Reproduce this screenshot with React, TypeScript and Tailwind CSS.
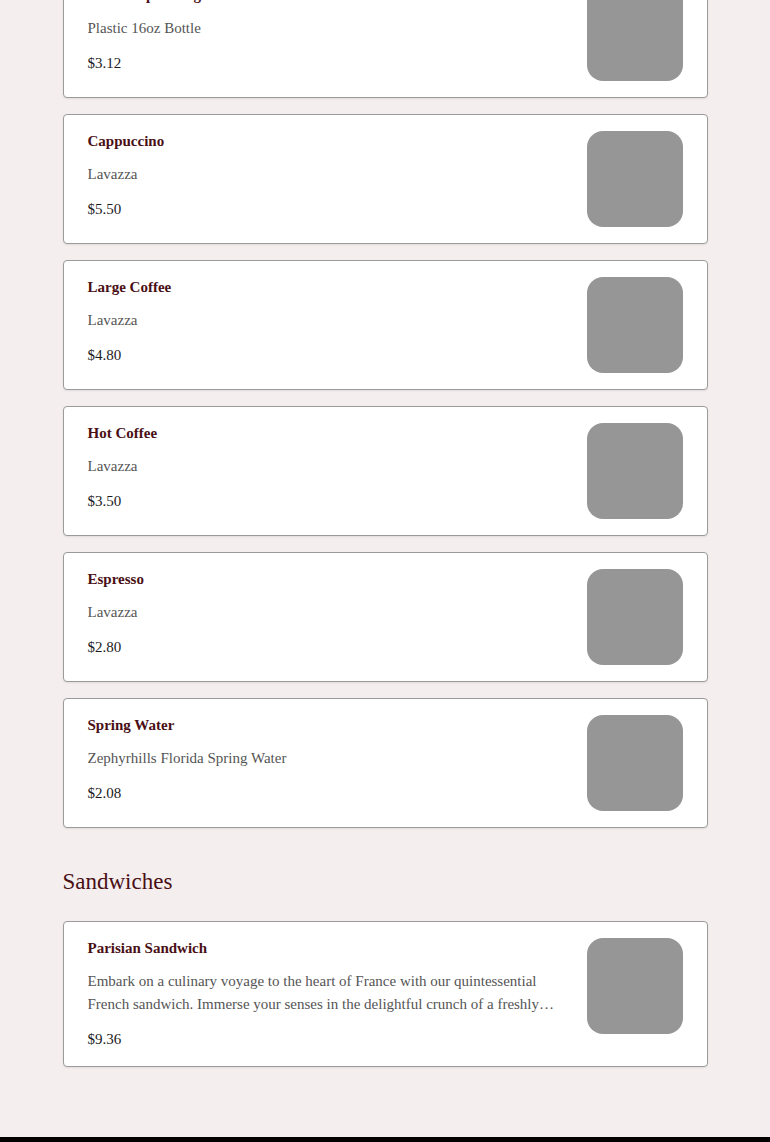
const drinks = [
  { id: 1, name: "Perrier Sparkling Water", detail: "Plastic 16oz Bottle", price: "$3.12" },
  { id: 2, name: "Cappuccino", detail: "Lavazza", price: "$5.50" },
  { id: 3, name: "Large Coffee", detail: "Lavazza", price: "$4.80" },
  { id: 4, name: "Hot Coffee", detail: "Lavazza", price: "$3.50" },
  { id: 5, name: "Espresso", detail: "Lavazza", price: "$2.80" },
  { id: 6, name: "Spring Water", detail: "Zephyrhills Florida Spring Water", price: "$2.08" },
];

const sandwiches = [
  {
    id: 7,
    name: "Parisian Sandwich",
    detail:
      "Embark on a culinary voyage to the heart of France with our quintessential French sandwich. Immerse your senses in the delightful crunch of a freshly baked baguette, layered with ham, brie and a touch of Dijon mustard.",
    price: "$9.36",
  },
];

type Item = { id: number; name: string; detail: string; price: string };

function MenuCard({ item }: { item: Item }) {
  return (
    <div className="flex gap-6 rounded-[4px] border border-[#9b9b9b] bg-white py-4 pl-6 pr-6 shadow-[0_1px_2px_rgba(0,0,0,0.08)]">
      <div className="flex min-w-0 flex-1 flex-col gap-3">
        <h3 className="font-['Liberation_Serif',serif] text-[15px] font-bold leading-[20px] text-[#4a0f15]">
          {item.name}
        </h3>
        <p className="line-clamp-2 font-['Liberation_Serif',serif] text-[15px] leading-[23px] text-[#555]">
          {item.detail}
        </p>
        <p className="font-['Liberation_Serif',serif] text-[15px] leading-[22px] text-[#1c1c1c]">{item.price}</p>
      </div>
      <div className="h-24 w-24 shrink-0 rounded-2xl bg-[#969696]"></div>
    </div>
  );
}

export default function App() {
  return (
    <div className="min-h-[1142px] bg-[#f4eeee] flex flex-col">
      <div className="mx-auto w-full max-w-[645px] -mt-[32px] flex-1">
        <div className="flex flex-col gap-4">
          {drinks.map((d) => (
            <MenuCard key={d.id} item={d} />
          ))}
        </div>

        <h2 className="mt-[38px] mb-[23px] font-['Liberation_Serif',serif] text-[23px] leading-[32px] text-[#4a0f15]">
          Sandwiches
        </h2>
        <div className="flex flex-col gap-4">
          {sandwiches.map((s) => (
            <MenuCard key={s.id} item={s} />
          ))}
        </div>
      </div>
      <div className="mt-[70px] h-[40px] bg-black"></div>
    </div>
  );
}
